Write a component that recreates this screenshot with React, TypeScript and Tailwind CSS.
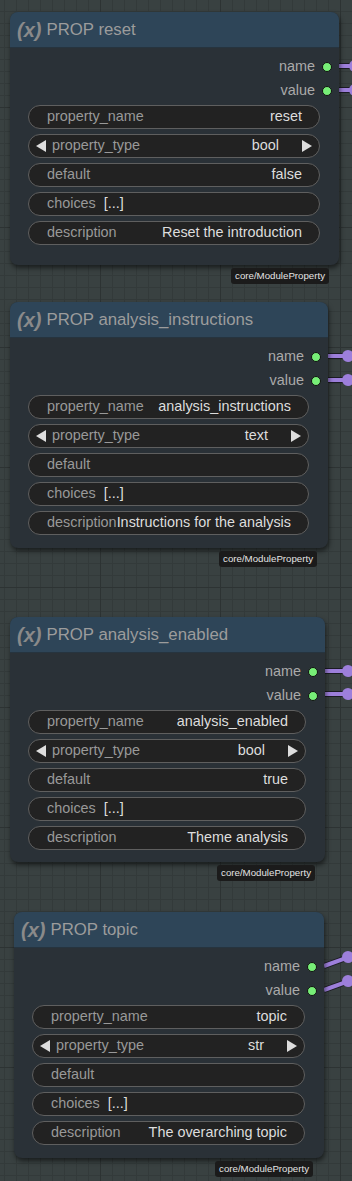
type Node = {
  title: string;
  wrap: string;
  card: string;
  badge: string;
  propName: string;
  propType: string;
  def: string;
  desc: string;
};

const nodes: Node[] = [
  {
    title: 'reset',
    wrap: 'mt-[12px] ml-[10px] w-[329px]',
    card: 'h-[253px]',
    badge: 'mr-[10px]',
    propName: 'reset',
    propType: 'bool',
    def: 'false',
    desc: 'Reset the introduction',
  },
  {
    title: 'analysis_instructions',
    wrap: 'mt-[18px] ml-[10px] w-[318px]',
    card: 'h-[246px]',
    badge: 'mr-[11px]',
    propName: 'analysis_instructions',
    propType: 'text',
    def: '',
    desc: 'Instructions for the analysis',
  },
  {
    title: 'analysis_enabled',
    wrap: 'mt-[50px] ml-[10px] w-[315px]',
    card: 'h-[245px]',
    badge: 'mr-[10px]',
    propName: 'analysis_enabled',
    propType: 'bool',
    def: 'true',
    desc: 'Theme analysis',
  },
  {
    title: 'topic',
    wrap: 'mt-[31px] ml-[14px] w-[310px]',
    card: 'h-[246px]',
    badge: 'mr-[11px]',
    propName: 'topic',
    propType: 'str',
    def: '',
    desc: 'The overarching topic',
  },
];

function Pill({ children }: { children: React.ReactNode }) {
  return (
    <div className="flex h-[24px] items-center whitespace-nowrap rounded-full border border-[#5f5f5f] bg-[#222222]">
      {children}
    </div>
  );
}

function Arrow({ dir }: { dir: 'left' | 'right' }) {
  return (
    <svg width="10" height="12" viewBox="0 0 10 12" className="shrink-0">
      {dir === 'left' ? <polygon points="10,0 10,12 0,6" fill="#dddddd" /> : <polygon points="0,0 0,12 10,6" fill="#dddddd" />}
    </svg>
  );
}

function Output({ label }: { label: string }) {
  return (
    <div className="flex h-[24px] items-center justify-end gap-[7px] pr-[7px]">
      <span className="text-[#aaaaaa]">{label}</span>
      <span className="h-[10px] w-[10px] rounded-full border border-[#111] bg-[#77ee77]" />
    </div>
  );
}

function NodeCard({ n }: { n: Node }) {
  return (
    <div className={n.wrap}>
      <div className={`flex flex-col rounded-[8px] bg-[#2a3137] shadow-[1px_3px_5px_rgba(0,0,0,0.55)] ${n.card}`}>
        <div className="flex h-[36px] items-center gap-[5px] rounded-t-[8px] border-b border-[#26343f] bg-[#2e4558] pl-[7px] pt-[1px]">
          <span className="text-[20px] font-bold italic text-[#8a8a8a]">(x)</span>
          <span className="text-[16.8px] text-[#9c9c9c]">PROP {n.title}</span>
        </div>
        <div className="flex flex-col pt-[7px] text-[14.4px]">
          <Output label="name" />
          <Output label="value" />
          <div className="ml-[18px] mr-[19px] mt-[2px] flex flex-col gap-[5px]">
            <Pill>
              <span className="pl-[18px] text-[#999999]">property_name</span>
              <span className="ml-auto pr-[17px] text-[#dddddd]">{n.propName}</span>
            </Pill>
            <Pill>
              <span className="pl-[7px]">
                <Arrow dir="left" />
              </span>
              <span className="pl-[6px] text-[#999999]">property_type</span>
              <span className="ml-auto pr-[23px] text-[#dddddd]">{n.propType}</span>
              <span className="pr-[7px]">
                <Arrow dir="right" />
              </span>
            </Pill>
            <Pill>
              <span className="pl-[18px] text-[#999999]">default</span>
              <span className="ml-auto pr-[17px] text-[#dddddd]">{n.def}</span>
            </Pill>
            <Pill>
              <span className="pl-[18px] text-[#999999]">choices</span>
              <span className="pl-[8px] text-[#dddddd]">[...]</span>
            </Pill>
            <Pill>
              <span className="shrink-0 pl-[18px] text-[#999999]">description</span>
              <span className="ml-auto shrink-0 pr-[17px] text-[#dddddd]">{n.desc}</span>
            </Pill>
          </div>
        </div>
      </div>
      <div className="flex justify-end">
        <div className={`mt-[3px] flex h-[16px] items-center rounded-[3px] bg-[#1b1b1b] px-[4px] text-[9.7px] text-[#e4e4e4] ${n.badge}`}>
          core/ModuleProperty
        </div>
      </div>
    </div>
  );
}

function Links() {
  const straight = [
    { x: 339, y: 66, cx: 355 },
    { x: 339, y: 90, cx: 355 },
    { x: 328, y: 356, cx: 348 },
    { x: 328, y: 380, cx: 348 },
    { x: 325, y: 671, cx: 348 },
    { x: 325, y: 694, cx: 348 },
  ];
  const diag = [
    { x: 324, y: 966, cx: 348, cy: 957 },
    { x: 324, y: 990, cx: 348, cy: 981 },
  ];
  return (
    <svg className="pointer-events-none absolute left-0 top-0" width="352" height="1181">
      {straight.map((l, i) => (
        <g key={i}>
          <line x1={l.x} y1={l.y} x2={360} y2={l.y} stroke="#1c1c24" strokeWidth="6" />
          <line x1={l.x} y1={l.y} x2={360} y2={l.y} stroke="#9d7fdb" strokeWidth="4" />
          <circle cx={l.cx} cy={l.y} r="6" fill="#9d7fdb" />
        </g>
      ))}
      {diag.map((l, i) => (
        <g key={i}>
          <line x1={l.x} y1={l.y} x2={l.cx + 12} y2={l.cy - 4} stroke="#1c1c24" strokeWidth="6" />
          <line x1={l.x} y1={l.y} x2={l.cx + 12} y2={l.cy - 4} stroke="#9d7fdb" strokeWidth="4" />
          <circle cx={l.cx} cy={l.cy} r="6" fill="#9d7fdb" />
        </g>
      ))}
    </svg>
  );
}

export default function App() {
  return (
    <div className="relative h-[1181px] w-[352px] overflow-hidden bg-[#394141] bg-[linear-gradient(to_right,#2d3333_1px,transparent_1px),linear-gradient(to_bottom,#2d3333_1px,transparent_1px),linear-gradient(to_right,#333a3a_1px,transparent_1px),linear-gradient(to_bottom,#333a3a_1px,transparent_1px)] bg-[size:120px_120px,120px_120px,12px_12px,12px_12px] bg-[position:100px_107px,100px_107px,100px_11px,100px_11px] font-['Liberation_Sans',Arial,sans-serif]">
      <Links />
      <div className="relative flex flex-col">
        {nodes.map((n) => (
          <NodeCard key={n.title} n={n} />
        ))}
      </div>
    </div>
  );
}
